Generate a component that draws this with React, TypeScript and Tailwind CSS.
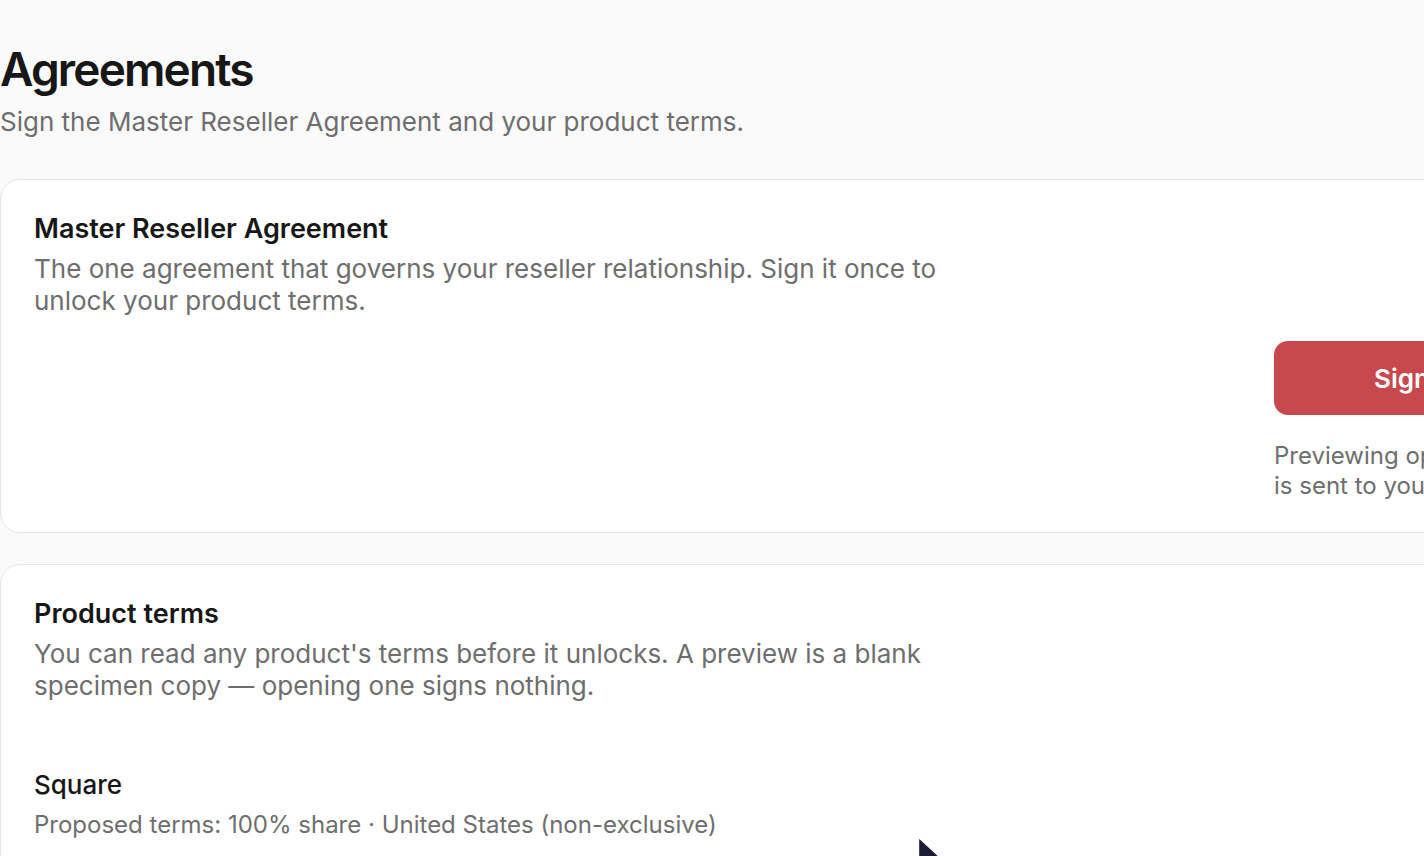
import React from 'react';

const font = { fontFamily: 'Inter, "Noto Sans", sans-serif' };

const Cursor = () => (
    <svg className="absolute left-[914px] top-[834px]" width="34" height="40" viewBox="0 0 17 20">
        <path d="M2 1 L2 17 L6 13 L9 19 L11.5 18 L8.7 12.2 L14 12.2 Z" fill="#1a1d33" stroke="#fff" strokeWidth="1.2" strokeLinejoin="round" />
    </svg>
);

const App = () => {
    return (
        <div className="relative w-[1424px] h-[856px] overflow-hidden bg-[#fafafa] text-[#171717]" style={font}>
            <div className="w-[1800px] pt-[42px]">
                <h1 className="text-[46px] leading-[54px] font-semibold tracking-[-0.04em]">Agreements</h1>
                <p className="mt-[10px] text-[26px] leading-[32px] text-[#6e6e6e]">
                    Sign the Master Reseller Agreement and your product terms.
                </p>

                <div className="mt-[41px] flex flex-col gap-[31px]">
                    <section className="flex items-start rounded-[20px] border border-[#e5e5e5] bg-white pl-[33px] pt-[33px] pb-[31px]">
                        <div className="w-[960px]">
                            <h2 className="text-[27px] leading-[32px] font-semibold">Master Reseller Agreement</h2>
                            <p className="mt-[8px] text-[26px] leading-[32px] text-[#6e6e6e]">
                                The one agreement that governs your reseller relationship. Sign it once to unlock your product terms.
                            </p>
                        </div>
                        <div className="ml-[280px] w-[398px] pt-[128px]">
                            <button className="flex h-[74px] w-full items-center justify-center rounded-[14px] bg-[#c8494d] text-[26px] font-semibold text-white">
                                Sign agreement
                            </button>
                            <p className="mt-[26px] text-[24px] leading-[30px] text-[#6e6e6e]">
                                Previewing opens a blank copy. It is sent to your email to sign.
                            </p>
                        </div>
                    </section>

                    <section className="rounded-[20px] border border-[#e5e5e5] bg-white pl-[33px] pt-[33px] pb-[40px]">
                        <h2 className="text-[27px] leading-[32px] font-semibold">Product terms</h2>
                        <p className="mt-[8px] w-[960px] text-[26px] leading-[32px] text-[#6e6e6e]">
                            You can read any product's terms before it unlocks. A preview is a blank specimen copy — opening one signs nothing.
                        </p>
                        <div className="mt-[67px]">
                            <h3 className="text-[26px] leading-[32px] font-medium">Square</h3>
                            <p className="mt-[9px] text-[24px] leading-[30px] text-[#6e6e6e]">
                                Proposed terms: 100% share · United States (non-exclusive)
                            </p>
                        </div>
                    </section>
                </div>
            </div>
            <Cursor />
        </div>
    );
};

export default App;
